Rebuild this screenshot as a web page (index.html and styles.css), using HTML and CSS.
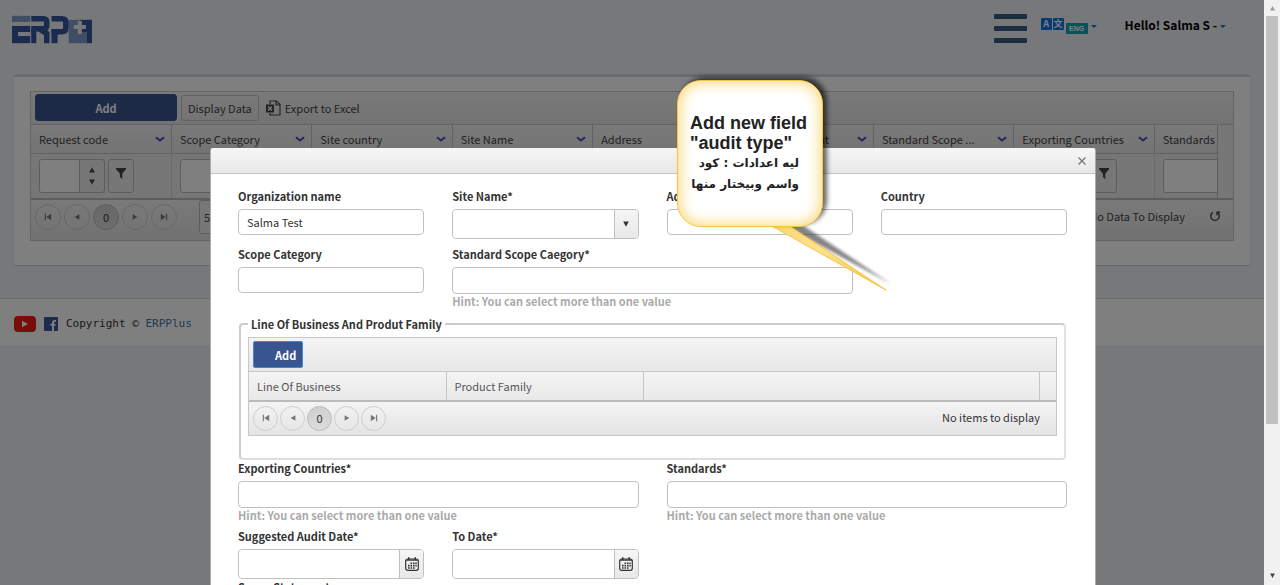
FILE: index.html
```html
<!DOCTYPE html>
<html lang="en">
<head>
<meta charset="utf-8">
<title>ERPPlus</title>
<link rel="stylesheet" href="styles.css">
</head>
<body>
<svg class="defs" aria-hidden="true">
  <symbol id="first" viewBox="0 0 10 10"><path d="M1 1h1.4v8H1zM9 1v8L2.8 5z"/></symbol>
  <symbol id="prev" viewBox="0 0 10 10"><path d="M8 1.5v7L2 5z"/></symbol>
  <symbol id="next" viewBox="0 0 10 10"><path d="M2 1.5v7L8 5z"/></symbol>
  <symbol id="last" viewBox="0 0 10 10"><path d="M9 1H7.6v8H9zM1 1v8l6.200-4z"/></symbol>
  <symbol id="down" viewBox="0 0 10 10"><path d="M1.500 2h7L5 8.500z"/></symbol>
  <symbol id="up" viewBox="0 0 10 10"><path d="M1.500 8h7L5 1.500z"/></symbol>
  <symbol id="chev" viewBox="0 0 10 10"><path d="M1 3.200l4 3.300 4-3.300" fill="none" stroke="currentColor" stroke-width="2"/></symbol>
  <symbol id="filter" viewBox="0 0 10 12"><path d="M0 0h10v1.200L6.300 5.500V11L3.900 9V5.500L0 1.200z"/></symbol>
  <symbol id="cal" viewBox="0 0 14 14"><rect x=".7" y="2" width="12.600" height="11.300" rx="2" fill="none" stroke="currentColor" stroke-width="1.200"/><path d="M1 2.500h12v1.200H1zM3 .3h1.500v2.500H3zM9.500.3H11v2.500H9.500zM5.500 5.500h1.600v1.600H5.500zM8 5.500h1.600v1.600H8zM10.300 5.500h1.400v1.600h-1.400zM3 7.800h1.600v1.600H3zM5.500 7.800h1.600v1.600H5.500zM8 7.800h1.600v1.600H8zM10.300 7.800h1.400v1.600h-1.400zM3 10.200h1.600v1.500H3zM5.500 10.200h1.600v1.500H5.500zM8 10.200h1.600v1.500H8z"/></symbol>
</svg>
<div class="window">
  <main class="page">
    <header class="topbar">
      <svg class="logo" viewBox="0 0 80 30" role="img" aria-label="ERP+">
        <g fill="#7f9bcb"><rect x="1" y="1" width="18" height="6"/><rect x="57" y="5" width="12" height="23"/><rect x="68" y="17" width="7" height="11"/></g>
        <g fill="#35579c"><rect x="1" y="11" width="18" height="17"/><rect x="68" y="5" width="12" height="12"/><rect x="75" y="5" width="5" height="23"/><rect x="20" y="14" width="5" height="14"/><rect x="40" y="14" width="6" height="14"/></g>
        <g fill="none" stroke="#35579c" stroke-width="5.500"><path d="M20 3.800h12q3.300 0 3.300 3.200v3q0 3.700-3.300 3.700H20M28 14l7.300 4.500V28"/><path d="M40 3.800h10q4.200 0 4.200 3.200v6q0 3.700-4.200 3.700H40"/></g>
        <g fill="#eef0f6"><rect x="7" y="17" width="12" height="4"/><rect x="66" y="6" width="4" height="13"/><rect x="62" y="10" width="12" height="4"/></g>
      </svg>
      <button class="menu" type="button" aria-label="Menu"><span></span><span></span><span></span></button>
      <button class="lang" type="button" aria-label="Language">
        <span class="glyph">A</span><span class="glyph">文</span><span class="eng">ENG</span><i class="caret"></i>
      </button>
      <button class="user" type="button">Hello! Salma S - <i class="caret"></i></button>
    </header>

    <section class="panel">
      <div class="grid">
        <div class="toolbar">
          <button class="primary wide" type="button">Add</button>
          <button class="btn" type="button">Display Data</button>
          <button class="plain" type="button">
            <svg class="line" width="15" height="16" viewBox="0 0 15 16" stroke="#444" stroke-width="1.200"><path d="M4 4V1h6.500L14 4.500V15H4v-2"/><path d="M10 1v4h4"/><rect x="0" y="4.500" width="8" height="8" fill="#444" stroke="none"/><path d="M2 6.500l4 4M6 6.500l-4 4" stroke="#fff"/></svg>
            Export to Excel</button>
        </div>
        <div class="table-clip">
          <table class="data">
            <thead>
              <tr>
                <th><div class="th"><span>Request code</span><svg><use href="#chev"/></svg></div></th>
                <th><div class="th"><span>Scope Category</span><svg><use href="#chev"/></svg></div></th>
                <th><div class="th"><span>Site country</span><svg><use href="#chev"/></svg></div></th>
                <th><div class="th"><span>Site Name</span><svg><use href="#chev"/></svg></div></th>
                <th><div class="th"><span>Address</span><svg><use href="#chev"/></svg></div></th>
                <th><div class="th"><span>Scope Statement</span><svg><use href="#chev"/></svg></div></th>
                <th><div class="th"><span>Standard Scope ...</span><svg><use href="#chev"/></svg></div></th>
                <th><div class="th"><span>Exporting Countries</span><svg><use href="#chev"/></svg></div></th>
                <th><div class="th"><span>Standards</span></div></th>
              </tr>
            </thead>
            <tbody>
              <tr>
                <td><div class="filter"><div class="spin"><input type="text" aria-label="Filter request code"><span class="arrows"><svg><use href="#up"/></svg><svg><use href="#down"/></svg></span></div><button type="button" aria-label="Filter"><svg><use href="#filter"/></svg></button></div></td>
                <td><div class="filter"><input type="text" aria-label="Filter scope category"></div></td>
                <td></td><td></td><td></td><td></td><td></td>
                <td><div class="filter"><input type="text" aria-label="Filter countries"><button type="button" aria-label="Filter"><svg><use href="#filter"/></svg></button></div></td>
                <td><div class="filter"><input type="text" aria-label="Filter standards"></div></td>
              </tr>
            </tbody>
          </table>
        </div>
        <div class="pager">
          <button type="button" aria-label="First"><svg><use href="#first"/></svg></button>
          <button type="button" aria-label="Previous"><svg><use href="#prev"/></svg></button>
          <button type="button" class="current">0</button>
          <button type="button" aria-label="Next"><svg><use href="#next"/></svg></button>
          <button type="button" aria-label="Last"><svg><use href="#last"/></svg></button>
          <select aria-label="Page size"><option>5</option></select>
          <span class="info">No Data To Display</span>
          <svg class="refresh line" viewBox="0 0 12 12" stroke="#444" stroke-width="1.400"><path d="M3.800 2.400a4.300 4.300 0 1 0 4.400 0"/><path d="M8 5.200V2.200h3"/></svg>
        </div>
      </div>
    </section>

    <footer class="footer">
      <svg width="22" height="16" viewBox="0 0 22 16"><rect width="22" height="16" rx="4" fill="#f01c14"/><path d="M8 4.800v6.400l6-3.200z" fill="#fff"/></svg>
      <svg width="14" height="14" viewBox="0 0 14 14"><rect width="14" height="14" rx="1" fill="#3b5998"/><path d="M9 14V5.500q0-2 3-1.500M6.500 7.800h5" fill="none" stroke="#fff" stroke-width="1.900"/></svg>
      <span>Copyright © <a href="#">ERPPlus</a></span>
    </footer>

    <div class="overlay">
      <section class="dialog" role="dialog" aria-label="Add request">
        <div class="titlebar"><button type="button" aria-label="Close"><svg width="8" height="8" viewBox="0 0 8 8"><path d="M.5.5l7 7M7.500.5l-7 7" stroke="#777" stroke-width="1.300"/></svg></button></div>
        <form class="form">
          <div class="row">
            <div class="field"><label for="org">Organization name</label><input id="org" type="text" value="Salma Test"></div>
            <div class="field"><label for="site">Site Name*</label><div class="combo"><input id="site" type="text"><button type="button" aria-label="Open list"><svg><use href="#down"/></svg></button></div></div>
            <div class="field"><label for="addr">Address</label><input id="addr" type="text"></div>
            <div class="field"><label for="country">Country</label><input id="country" type="text"></div>
          </div>
          <div class="row second">
            <div class="field"><label for="scope">Scope Category</label><input id="scope" type="text"></div>
            <div class="field span2"><label for="std">Standard Scope Caegory*</label><input id="std" type="text"><small>Hint: You can select more than one value</small></div>
          </div>
          <fieldset>
            <legend>Line Of Business And Produt Family</legend>
            <div class="grid inner">
              <div class="toolbar"><button class="primary" type="button">Add</button></div>
              <table class="lines">
                <thead><tr><th class="a">Line Of Business</th><th class="a">Product Family</th><th></th><th class="end"></th></tr></thead>
              </table>
              <div class="pager small">
                <button type="button" aria-label="First"><svg><use href="#first"/></svg></button>
                <button type="button" aria-label="Previous"><svg><use href="#prev"/></svg></button>
                <button type="button" class="current">0</button>
                <button type="button" aria-label="Next"><svg><use href="#next"/></svg></button>
                <button type="button" aria-label="Last"><svg><use href="#last"/></svg></button>
                <span class="info">No items to display</span>
              </div>
            </div>
          </fieldset>
          <div class="row">
            <div class="field span2"><label for="exp">Exporting Countries*</label><input id="exp" type="text"><small>Hint: You can select more than one value</small></div>
            <div class="field span2"><label for="stds">Standards*</label><input id="stds" type="text"><small>Hint: You can select more than one value</small></div>
          </div>
          <div class="row dates">
            <div class="field"><label for="from">Suggested Audit Date*</label><div class="combo"><input id="from" type="text"><button type="button" aria-label="Pick date"><svg class="cal"><use href="#cal"/></svg></button></div></div>
            <div class="field"><label for="to">To Date*</label><div class="combo"><input id="to" type="text"><button type="button" aria-label="Pick date"><svg class="cal"><use href="#cal"/></svg></button></div></div>
          </div>
          <div class="field"><label for="stmt">Scope Statement</label><textarea id="stmt"></textarea></div>
        </form>
      </section>
    </div>

    <aside class="callout">
      <svg class="tail" viewBox="0 0 140 80">
        <defs>
          <filter id="soft"><feGaussianBlur stdDeviation="1.500"/></filter>
          <linearGradient id="gold" x1="0" y1="0" x2="1" y2="1"><stop offset="0" stop-color="#fbd572"/><stop offset=".4" stop-color="#ffe28e"/><stop offset="1" stop-color="#f8c437"/></linearGradient>
        </defs>
        <path d="M14 4h20l90 60z" fill="#333" opacity=".6" filter="url(#soft)"/>
        <path d="M3 5h18l98 65z" fill="url(#gold)" stroke="#f6c545" stroke-width="1"/>
      </svg>
      <div class="bubble">
        <p>Add new field<br>"audit type"</p>
        <p class="ar" dir="rtl" lang="ar">ليه اعدادات : كود<br>واسم وبيختار منها</p>
      </div>
    </aside>
  </main>
  <div class="scrollbar" aria-hidden="true"><svg><use href="#up"/></svg><div class="thumb"></div><svg class="dn"><use href="#down"/></svg></div>
</div>
</body>
</html>
```

FILE: styles.css
```css
* { box-sizing: border-box; }
body { margin: 0; font: 11px/16px "Noto Sans CJK SC", "Open Sans", sans-serif; color: #444; }
button, input, select, textarea { font: inherit; color: inherit; margin: 0; }
button { padding: 0; border: 0; background: none; cursor: pointer; }
svg { display: block; fill: currentColor; }
.line { fill: none; }
.defs { display: none; }
.window { display: flex; height: 100vh; overflow: hidden; }
.page { position: relative; flex: 1; min-width: 0; overflow: hidden; background: #eef0f5; }

.topbar { display: flex; align-items: flex-start; height: 74px; padding: 14px 38px 0 11px; }
.logo { width: 81px; height: 32px; margin-right: auto; }
.menu { display: grid; gap: 7px; width: 33px; }
.menu span { height: 5px; border-radius: 1px; background: #3a5a80; }
.lang { display: flex; gap: 1px; align-items: flex-start; margin: 4px 28px 0 14px; }
.glyph { width: 11px; height: 12px; border-radius: 1px; background: #1573e6; color: #fff; font-size: 9px; font-weight: 700; line-height: 12px; }
.eng { margin: 5px 2px 0 1px; width: 22px; height: 11px; border-radius: 1px; background: #17a2b8; color: #fff; font: 700 7px/12px "Liberation Sans", sans-serif; }
.caret { display: inline-block; border: 3px solid transparent; border-top-color: #1a73c8; border-bottom: 0; vertical-align: middle; }
.lang .caret { margin-top: 7px; }
.user { margin-top: 3px; font-size: 12px; font-weight: 700; color: #000; }

.panel { margin: 0 14px; padding: 14px 16px 24px; background: #fff; border-top: 3px solid #d2d6de; border-radius: 3px; box-shadow: 0 1px 1px #ccc; }
.grid { border: 1px solid #c8c8c8; background: #eee; }
.toolbar { display: flex; align-items: center; gap: 4px; height: 33px; padding: 0 4px 1px; background: linear-gradient(#f4f4f4, #e8e7e8); border-bottom: 1px solid #c8c8c8; }
.primary { height: 27px; padding: 0 6px 0 21px; border: 1px solid #428bca; border-radius: 2px; background: #38558f; color: #fff; font-weight: 700; }
.primary.wide { width: 142px; padding: 0; border-color: #35579c; border-radius: 3px; }
.btn { height: 26px; padding: 0 6px; border: 1px solid #c5c5c5; border-radius: 3px; }
.plain { display: flex; align-items: center; gap: 4px; padding: 0 3px; }
.table-clip { margin-right: 15px; overflow: hidden; border-right: 1px solid #bbb; }
.data { width: 106.6%; table-layout: fixed; border-collapse: collapse; }
.data th { height: 28px; padding: 0; font-weight: 400; text-align: left; border-right: 1px solid #c5c5c5; border-bottom: 1px solid #c5c5c5; background: linear-gradient(#f4f4f4, #e8e7e8); }
.th { display: flex; align-items: center; gap: 8px; padding: 0 6px 0 8px; }
.th span { flex: 1; white-space: nowrap; }
.th svg { width: 10px; height: 10px; color: #4a4ac0; }
.data td { height: 45px; padding: 0 8px; border-right: 1px solid #d5d5d5; background: #ececec; }
.filter { display: flex; gap: 3px; }
.filter input { flex: none; width: 66px; height: 34px; border: 1px solid #bbb; border-radius: 3px; background: #fff; }
.filter button { display: grid; place-items: center; width: 26px; height: 34px; border: 1px solid #bbb; border-radius: 3px; background: #eee; }
.filter button svg { width: 10px; height: 12px; margin-bottom: 4px; }
.spin { display: flex; width: 66px; border: 1px solid #bbb; border-radius: 3px; }
.spin input { flex: 1; min-width: 0; height: 32px; border: 0; border-right: 1px solid #bbb; border-radius: 2px 0 0 2px; }
.arrows { display: grid; place-content: center; gap: 4px; width: 24px; }
.arrows svg { width: 8px; height: 8px; }

.pager { display: flex; align-items: center; gap: 3px; height: 42px; padding: 0 12px 6px 4px; border-top: 2px solid #bbb; background: linear-gradient(#f4f4f4, #e4e4e4); }
.pager button { display: grid; place-items: center; width: 26px; height: 26px; border: 1px solid #cfcfcf; border-radius: 50%; color: #777; }
.pager button svg { width: 8px; height: 8px; }
.pager .current { background: linear-gradient(#cfcfcf, #dcdcdc); border-color: #bbb; color: #333; }
.pager select { width: 60px; height: 34px; margin-left: 19px; padding-left: 4px; border: 1px solid #bbb; border-radius: 3px; background: #eee; appearance: none; }
.pager .info { margin: 0 0 3px auto; }
.pager .refresh { width: 12px; height: 12px; margin: 0 0 3px 21px; }

.footer { display: flex; align-items: center; gap: 8px; height: 48px; margin-top: 33px; padding: 2px 14px 0; border-top: 1px solid #d2d6de; background: #fff; font: 11px/16px "DejaVu Sans Mono", monospace; color: #333; }
.footer a { color: #3677a8; text-decoration: none; }

.overlay { position: absolute; inset: 0; padding: 148px 168px 0 210px; background: rgba(0, 0, 0, .5); overflow: hidden; }
.dialog { border: 1px solid #aaa; border-top: 0; border-radius: 3px 3px 0 0; background: #fff; color: #333; overflow: hidden; }
.titlebar { display: flex; justify-content: flex-end; align-items: center; height: 26px; padding: 0 9px; background: linear-gradient(#f6f6f6, #e9e8e9); border-bottom: 1px solid #c5c5c5; }
.form { padding: 14px 28px 0 27px; }
.row { display: grid; grid-template-columns: repeat(4, 1fr); gap: 28px; }
.second { margin: 7px 0; }
.dates { margin-top: 5px; }
.field { display: flex; flex-direction: column; min-width: 0; }
.span2 { grid-column: span 2; }
.field label { margin-bottom: 5px; font-weight: 700; }
.field input { width: 100%; height: 26px; padding: 0 8px; border: 1px solid #c0c0c0; border-radius: 4px; background: #fff; }
.span2 input { height: 27px; }
.field small { font-size: 11px; line-height: 15px; font-weight: 700; color: #aaa; }
.combo { display: flex; height: 30px; border: 1px solid #c0c0c0; border-radius: 4px; overflow: hidden; }
.field .combo input { flex: 1; min-width: 0; height: 28px; border: 0; }
.combo button { display: grid; place-items: center; width: 24px; border-left: 1px solid #c0c0c0; background: linear-gradient(#f6f6f6, #e8e8e8); }
.combo svg { width: 8px; height: 8px; }
.combo .cal { width: 14px; height: 14px; }
textarea { height: 60px; }
fieldset { min-width: 0; margin: 0 1px; padding: 5px 7px 22px; border: 2px solid; border-color: #ccc #e2e2e2 #ddd #ccc; border-radius: 4px; }
legend { padding: 0 3px; font-weight: 700; }
.inner .toolbar { height: 34px; padding-bottom: 0; }
.lines { width: 100%; table-layout: fixed; border-collapse: collapse; background: linear-gradient(#f4f4f4, #eae9ea); }
.lines th { height: 28px; padding: 0 8px; font-weight: 400; text-align: left; border-right: 1px solid #c5c5c5; color: #555; }
.lines .a { width: 197px; }
.lines .end { width: 17px; padding: 0; border-right: 0; }
.small { height: 35px; gap: 2px; padding: 0 16px 1px 4px; }
.small button { width: 25px; height: 25px; }

.callout { position: absolute; left: 677px; top: 80px; width: 146px; color: #222; }
.bubble { position: relative; height: 147px; padding: 32px 12px; border: 1px solid #f6c545; border-radius: 24px; background: #fff; box-shadow: inset 0 0 14px 2px #fcd877, 4px -3px 5px rgba(0, 0, 0, .6); font: 700 18px/20px "Liberation Sans", "DejaVu Sans", sans-serif; white-space: nowrap; }
.bubble p { margin: 0; }
.bubble .ar { width: 109px; font: 700 12px/21px "DejaVu Sans", sans-serif; }
.tail { position: absolute; left: 90px; top: 140px; width: 140px; height: 80px; }

.scrollbar { display: flex; flex-direction: column; align-items: center; width: 16px; padding: 5px 2px 6px; background: #f1f1f1; color: #999; }
.scrollbar svg { width: 7px; height: 7px; }
.thumb { width: 12px; height: 71%; margin-top: 4px; background: #c1c1c1; }
.scrollbar .dn { margin-top: auto; color: #444; }
```
